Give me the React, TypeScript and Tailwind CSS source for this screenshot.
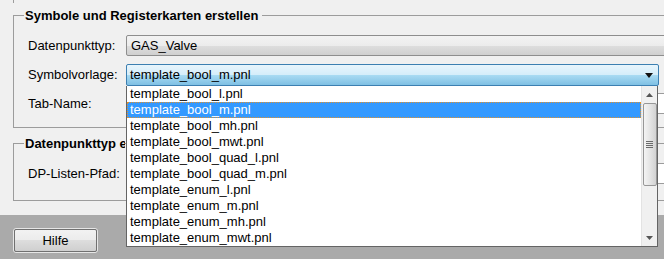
import React from 'react';

const items = [
  'template_bool_l.pnl',
  'template_bool_m.pnl',
  'template_bool_mh.pnl',
  'template_bool_mwt.pnl',
  'template_bool_quad_l.pnl',
  'template_bool_quad_m.pnl',
  'template_enum_l.pnl',
  'template_enum_m.pnl',
  'template_enum_mh.pnl',
  'template_enum_mwt.pnl',
];

function GroupHeader({ title, clip }: { title: string; clip?: boolean }) {
  return (
    <div className="flex h-[17px] items-center">
      <div className="h-[9px] w-[11px] self-end border-l border-t border-[#9c9c9c]" />
      <span
        className={
          clip
            ? 'max-w-[101px] overflow-hidden whitespace-nowrap pl-[1px] text-[13px] font-bold leading-[17px] text-black'
            : 'pl-[1px] pr-[4px] text-[13px] font-bold leading-[17px] text-black'
        }
      >
        {title}
      </span>
      <div className="h-px flex-1 bg-[#9c9c9c]" />
    </div>
  );
}

function Row({ label, children }: { label: string; children: React.ReactNode }) {
  return (
    <div className="flex items-center">
      <div className="w-[98px] shrink-0 text-[13px] text-black">{label}</div>
      <div className="flex-1">{children}</div>
    </div>
  );
}

export default function App() {
  return (
    <div className="relative flex h-[259px] w-[664px] flex-col overflow-hidden bg-[#f0f0f0] font-['Liberation_Sans',Arial,sans-serif]">
      <div className="ml-[13px] h-[3px] border-l border-[#9c9c9c]" />

      {/* Symbole und Registerkarten */}
      <div className="ml-[13px] mt-[4px] w-[700px]">
        <GroupHeader title="Symbole und Registerkarten erstellen" />
        <div className="flex flex-col border-b border-l border-[#9c9c9c] pb-[13px] pl-[14px] pt-[11px]">
          <Row label="Datenpunkttyp:">
            <div className="flex h-[21px] items-center rounded-[2px] border border-[#8e8e8e] bg-[linear-gradient(#f3f3f3,#ececec_50%,#dedede_50%,#d0d0d0)] pl-[4px] text-[13px] text-black">
              GAS_Valve
            </div>
          </Row>
          <div className="mt-[8px]">
            <Row label="Symbolvorlage:">
              <div className="flex h-[22px] w-[533px] items-center justify-between rounded-[2px] border border-[#3c7fb1] bg-[linear-gradient(#e8f5fc,#d4edfa_50%,#a9dbf3_50%,#7fc0e4)] pl-[3px] pr-[5px] text-[13px] text-black">
                <span>template_bool_m.pnl</span>
                <svg width="8" height="5" viewBox="0 0 8 5">
                  <path d="M0 0H8L4 5Z" fill="#111" />
                </svg>
              </div>
            </Row>
          </div>
          <div className="mt-[7px]">
            <Row label="Tab-Name:">
              <div className="h-[21px] border border-[#9c9c9c] bg-white" />
            </Row>
          </div>
        </div>
      </div>

      {/* Datenpunkttyp erstellen */}
      <div className="ml-[13px] mt-[7px] w-[700px]">
        <GroupHeader title="Datenpunkttyp erstellen" clip />
        <div className="flex flex-col border-b border-l border-[#9c9c9c] pb-[16px] pl-[14px] pt-[11px]">
          <Row label="DP-Listen-Pfad:">
            <div className="h-[21px] border border-[#9c9c9c] bg-white" />
          </Row>
        </div>
      </div>

      {/* Button bar */}
      <div className="mt-[14px] flex-1 bg-[#aaaaaa] pl-[13px] pt-[13px]">
        <div className="h-[25px] w-[85px] rounded-[3px] border border-[#e6e6e6] p-0">
          <div className="flex h-full w-full items-center justify-center rounded-[2px] border border-[#707070] bg-[linear-gradient(#f2f2f2,#ebebeb_50%,#dddddd_50%,#cfcfcf)] text-[13px] text-black">
            Hilfe
          </div>
        </div>
      </div>

      {/* Open dropdown list */}
      <div className="absolute left-[126px] top-[86px] flex w-[532px] border-b border-l border-r border-[#646464] bg-white">
        <div className="flex flex-1 flex-col">
          {items.map((it, i) =>
            i === 1 ? (
              <div
                key={it}
                className="h-[16px] border border-dotted border-[#e0902c] bg-[#3399ff] pl-[2px] text-[13px] leading-[14px] text-white"
              >
                {it}
              </div>
            ) : (
              <div key={it} className="h-[16px] pl-[3px] text-[13px] leading-[16px] text-black">
                {it}
              </div>
            )
          )}
        </div>
        <div className="flex w-[16px] flex-col items-center border-l border-[#e3e3e3] bg-[#f0f0f0]">
          <div className="flex h-[17px] items-center justify-center">
            <svg width="7" height="4" viewBox="0 0 7 4">
              <path d="M0 4H7L3.5 0Z" fill="#555" />
            </svg>
          </div>
          <div className="flex h-[83px] w-[14px] items-center justify-center rounded-[2px] border border-[#979797] bg-[linear-gradient(90deg,#f4f4f4,#e4e4e4_50%,#d2d2d2)]">
            <div className="flex flex-col gap-[1px]">
              <div className="h-px w-[7px] bg-[#6a6a6a]" />
              <div className="h-px w-[7px] bg-[#6a6a6a]" />
              <div className="h-px w-[7px] bg-[#6a6a6a]" />
              <div className="h-px w-[7px] bg-[#6a6a6a]" />
            </div>
          </div>
          <div className="flex-1" />
          <div className="flex h-[17px] items-center justify-center">
            <svg width="7" height="4" viewBox="0 0 7 4">
              <path d="M0 0H7L3.5 4Z" fill="#555" />
            </svg>
          </div>
        </div>
      </div>
    </div>
  );
}
